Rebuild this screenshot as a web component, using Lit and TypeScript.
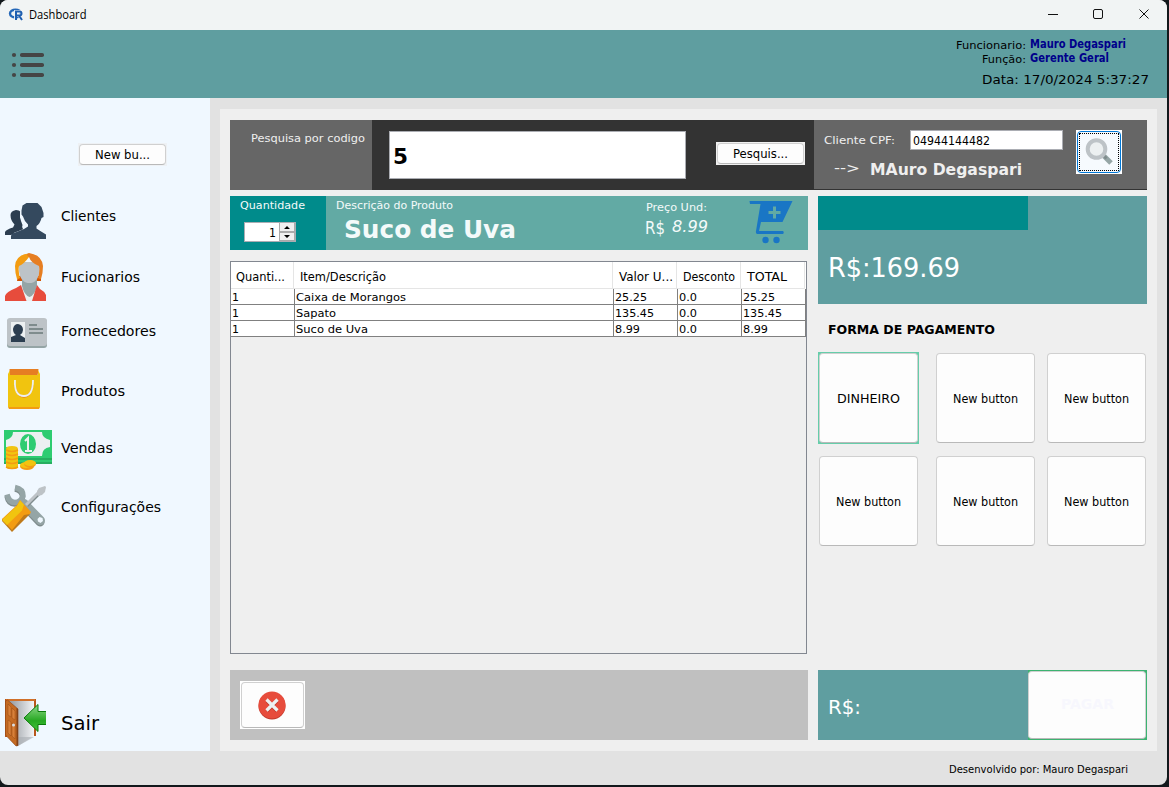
import { LitElement, html, svg, css } from "lit";
import { customElement } from "lit/decorators.js";

/** One line of text set to a known measure; the box ends on the baseline. */
const label = (text: string, width: number, size: number, cls = "") => html`<svg
  class="label ${cls}" width=${width} height=${size}><text x="0" y=${size} font-size=${size}
  textLength=${width} lengthAdjust="spacingAndGlyphs">${text}</text></svg>`;

const clients = svg`
  <path fill="#2c3e50" d="M16 210q3 0 5 2l-1 5 1 4 1.500 4q-1 2 .5 4l1 1-13 5H5v-3q1-2.500 8-4.500l1.500-3q-4-4-4-9.500 0-4 5.500-5z"/>
  <path fill="none" stroke="#f0f8ff" stroke-width="2" d="M23 204l-2 8v5l2 3q1 4 4 7l-3 3-10 4"/>
  <path fill="#34495e" d="M26.500 203h11l4 4 2 6v4l-2 1q-1 5-5 8v2.500l3 2 6.500 4v4.500H11v-3q0-2 3-3l10-4 4-2.500v-2q-4-4-5-8l-1.500-2v-4l1-5z"/>`;
const employee = svg`
  <path fill="#d35400" d="M18 276h23v5H17z"/>
  <path fill="#ecf0f1" d="M21 285h16l-1 16H24z"/>
  <path fill="#95a5a6" d="M22 279h15v7q-2 9-7.500 11-5.500-2-7.500-11z"/>
  <path fill="#bdc3c7" d="M19 262h20.500v9q-1 10-8 12h-4q-7.500-2-8.500-12z"/>
  <path fill="#f39c12" d="M29 253.500q-13 1-14 12.500 0 7 2 13 2 0 3-1-2-7-1-12 5-2 10-9z"/>
  <path fill="#e67e22" d="M29 253q13 2 14 13 0 7-2 13-2 0-3-1 2-7 1-12-8-3-10-9-2-1-2-3z"/>
  <path fill="#e74c3c" d="M21 285l5.500 16H5v-5q1-4 11-8zM37 285l-5 16h14v-6q-2-4-6-6z"/>`;
const card = svg`
  <rect x="7" y="319" width="40" height="29" rx="3" fill="#95a5a6"/>
  <rect x="7" y="318" width="40" height="28" rx="3" fill="#bdc3c7"/>
  <path fill="#ecf0f1" d="M11 322h14v20H11z"/>
  <path fill="#2c3e50" d="M18 324q5 1 5 6q0 3-3 5l5 3v4H11v-5l5-2q-3-2-3-6q1-5 5-5z"/>
  <path fill="#7f8c8d" d="M29 324h8v2h-8zM29 328h14v2H29zM29 332h14v2H29z"/>`;
const bag = svg`
  <path fill="#e67e22" d="M9.500 369h29l-1 7H10z"/>
  <path fill="#f39c12" d="M8 376h32v31l-1 2H9l-1-2z"/>
  <path fill="#f1c40f" d="M8 374l2-4v5h28v-5l2 4v33H8z"/>
  <path fill="none" stroke="#e67e22" stroke-width="1.500" d="M14.500 385q3 12 9.500 12q6 0 9-12"/>
  <path fill="none" stroke="#ecf0f1" stroke-width="1.800" d="M15 380q-1 16 9 16q9 0 9-16"/>`;
const money = svg`
  <path fill="#2ecc71" d="M4 430h48v34H4z"/>
  <path fill="#27ae60" d="M4 458h48v2H4zM4 462h48v2H4z"/>
  <path fill="#ecf0f1" d="M13 432h29q0 6 8 8v7q-8 1-8 9H13q0-8-7-9v-7q7-2 7-8z"/>
  <ellipse cx="28" cy="444" rx="8" ry="10" fill="#2ecc71"/>
  <path fill="none" stroke="#ecf0f1" stroke-width="2" d="M25 441l3-3v12M25 451h7"/>
  <path fill="#f1c40f" d="M6 449q0-3 6-3t6 3v18q0 2-6 2t-6-2z"/>
  <path fill="none" stroke="#f39c12" stroke-width="1.500" d="M6 450q6 3 12 0M6 454q6 3 12 0M6 458q6 3 12 0M6 462q6 3 12 0M6 467q6 3 12 0"/>
  <ellipse cx="27" cy="466.500" rx="7" ry="3.500" fill="#f39c12"/><ellipse cx="26" cy="465" rx="6" ry="3" fill="#f1c40f"/>
  <ellipse cx="30" cy="464" rx="6" ry="3.500" fill="#f39c12"/><ellipse cx="30" cy="463" rx="6" ry="3" fill="#f1c40f"/>`;
const tools = svg`
  <g fill="none" stroke="#7f8c8d"><path stroke-width="5.500" d="M15 489q8 1.500 7.500 8.500q-2 6-8 6.500q-6 0-7.500-8"/>
  <path stroke-width="9" stroke-linecap="round" d="M24 505l16 17"/></g>
  <g fill="none" stroke="#95a5a6"><path stroke-width="5.500" d="M15 487.500q8 1.500 8 8.500q-2 6-8 6.500q-6 0-8-8"/>
  <path stroke-width="9" stroke-linecap="round" d="M24 503.500l16.500 17"/></g>
  <path fill="#f0f8ff" d="M37.500 519l2-2 3 1 .5 3-2.500 2-2.500-1.500z"/>
  <path stroke="#7f8c8d" stroke-width="3.500" d="M27 505.500l12.500-12.500"/>
  <path stroke="#bdc3c7" stroke-width="3" d="M26 505l13-13"/>
  <path fill="#bdc3c7" d="M37 491l2-3 6-2 1 1-1 5-3 3-4 1z"/>
  <path fill="#bf7a1a" d="M2 519v2l10 11 18-18v-2z"/>
  <path fill="#f39c12" d="M20 500l11 12-1 2-6 1-12 15-10-11 15-14z"/>
  <path fill="#f1c40f" d="M20 500.500l4 4-2 6L7 525l-5-5 15-14z"/>`;
const door = svg`
  <path fill="#b8571b" d="M5 699h31v37h-2v-35H7v36H5z"/>
  <path fill="#e98b3b" d="M6 699.500h29v1H6z"/>
  <path fill="url(#room)" d="M8 701h26v35l-16 10z"/>
  <path fill="#a9adb3" opacity=".6" d="M18 737h16l-16 9z"/>
  <path fill="#c46a22" stroke="#8f4210" stroke-width=".6" d="M5.500 701l2-1 10.500 9v36.500l-2 .5L5.500 735z"/>
  <path fill="#824015" d="M16.500 708l1.500 1v36.500l-1.500.5z"/>
  <path fill="#d98038" stroke="#9a4c17" stroke-width=".5" d="M8 704l3 3v10l-3-2zM12 708l3 3v9l-3-2zM8 720l3 2v14l-3-3zM12 723l3 2v14l-3-3z"/>
  <circle cx="13.500" cy="725" r="1.500" fill="#d8dde2"/>
  <path fill="url(#arrow)" stroke="#0a7a0a" stroke-width="1" d="M47 711.500h-9v-7L24 718l14 13.500v-7h9"/>
  <path fill="#f0f8ff" d="M46 703h3v30h-3z"/>
  <defs><linearGradient id="room"><stop offset="0" stop-color="#8f949a"/><stop offset="1" stop-color="#f2f4f6"/></linearGradient>
  <linearGradient id="arrow" x2="0" y2="1"><stop offset="0" stop-color="#8ed88a"/><stop offset=".6" stop-color="#27a822"/><stop offset="1" stop-color="#45c53e"/></linearGradient></defs>`;

const menu = [
  { name: "clientes", text: "Clientes", w: 55, y: 192, icon: clients },
  { name: "funcionarios", text: "Fucionarios", w: 79, y: 253, icon: employee },
  { name: "fornecedores", text: "Fornecedores", w: 95, y: 307, icon: card },
  { name: "produtos", text: "Produtos", w: 64, y: 367, icon: bag },
  { name: "vendas", text: "Vendas", w: 52, y: 424, icon: money },
  { name: "config", text: "Configurações", w: 100, y: 483, icon: tools },
];

const rows = [
  ["Caixa de Morangos", 110, "25.25", 32],
  ["Sapato", 40, "135.45", 39],
  ["Suco de Uva", 72, "8.99", 25],
] as [string, number, string, number][];

@customElement("app-root")
export class AppRoot extends LitElement {
  static styles = css`
    :host { display: block; width: 1169px; height: 787px; background: #12181b; overflow: hidden;
      font-family: "DejaVu Sans", Verdana, sans-serif; color: #000; }
    * { box-sizing: border-box; }
    svg { display: block; flex: none; overflow: visible; }
    .label { fill: currentColor; }
    .bold { font-weight: bold; }
    .italic { font-style: italic; }
    .ui { font-family: "DejaVu Sans Condensed", "DejaVu Sans", sans-serif; font-stretch: condensed; }
    .segoe { font-family: "Open Sans", "Noto Sans", sans-serif; }
    .window { width: 1167px; height: 785px; border-radius: 8px; overflow: hidden; background: #e2e2e2; display: flex; flex-direction: column; }
    .titlebar { height: 30px; flex: none; background: #f1f4f4; display: flex; align-items: flex-start; }
    .titlebar .label { margin: 7px auto 0 5px; }
    .header { height: 68px; flex: none; background: #5f9ea0; display: flex; justify-content: space-between; }
    .user { display: flex; flex-direction: column; align-items: flex-end; padding-right: 18px; }
    .who { display: flex; margin: 0 23px 8px 0; height: 33px; }
    .who > div { display: flex; flex-direction: column; }
    .keys { align-items: flex-end; padding-top: 8px; gap: 3px; margin-right: 4px; }
    .vals { padding-top: 6px; gap: 2px; color: #00008b; }
    .middle { display: flex; height: 653px; flex: none; }
    .side { width: 210px; background: #f0f8ff; display: flex; flex-direction: column; }
    .btn { background: #fdfdfd; border: 1px solid #d0d0d0; border-bottom-color: #b9b9b9; border-radius: 4px;
      display: flex; align-items: center; justify-content: center; }
    .small { padding: 1px; background: #f0f0f0; flex: none; }
    .small .btn { width: 100%; height: 100%; padding: 0 0 3px 0; }
    .new { width: 89px; height: 23px; margin: 45px 0 26px 78px; background: #eef1f4; }
    .item { display: flex; align-items: center; height: 48px; flex: none; }
    .item .label { margin-bottom: 4px; }
    .funcionarios { margin-top: 13px; } .fornecedores { margin-top: 6px; } .produtos { margin-top: 12px; }
    .vendas { margin-top: 9px; } .config { margin-top: 11px; }
    .sair { margin: auto 0 4px; }
    .sair .label { margin: 0 0 5px; }
    .panel { margin: 11px 0 0 10px; width: 937px; background: #efefef; padding: 11px 10px; }
    .search { display: flex; height: 70px; background: #333; color: #efefef; margin-bottom: 6px; }
    .code { width: 142px; background: #666; padding: 11px 0 0 21px; }
    .field { background: #fff; border: 1px solid #abadb3; color: #000; }
    .big { width: 297px; height: 48px; margin: 11px 30px 0 17px; padding: 10px 3px; }
    .find { width: 89px; height: 23px; margin-top: 22px; color: #000; }
    .client { margin-left: 9px; width: 333px; height: 69px; background: #666; display: flex; padding: 10px 25px 0 10px; justify-content: space-between; }
    .cpf { display: flex; }
    .cpf > .label { margin: 3px 15px 0 0; }
    .cpf .field { width: 153px; height: 20px; padding: 2px; }
    .found { display: flex; margin: 9px 0 0 10px; gap: 10px; }
    .lens { width: 46px; height: 44px; background: #fff; padding: 1px; }
    .lens div { height: 42px; border: 1px solid #0078d7; border-radius: 4px; background: #f6fafe; padding: 1px; }
    .lens svg { outline: 1px dotted #000; outline-offset: -1px; }
    .cols { display: flex; justify-content: space-between; }
    .left { width: 578px; } .right { width: 329px; }
    .product { display: flex; height: 54px; background: #62aaa4; color: #f4fafa; margin-bottom: 11px; }
    .qty { width: 96px; background: #008b8b; padding: 3px 10px; }
    .spin { width: 52px; height: 20px; margin: 13px 0 0 4px; display: flex; justify-content: flex-end; padding: 0; }
    .spin .label { margin: 2px 3px 0 0; }
    .desc { padding: 3px 10px; width: 315px; }
    .desc .label + .label { margin: 4px 0 0 8px; }
    .price { padding-top: 5px; margin-left: 4px; width: 104px; }
    .price > .label { margin-left: 1px; }
    .amount { display: flex; gap: 7px; margin-top: 5px; }
    .grid { width: 577px; height: 393px; border: 1px solid #828790; margin-bottom: 16px; }
    .tr { display: grid; grid-template-columns: 64px 319px 64px 64px 64px; height: 16px; }
    .tr > div { border-right: 1px solid #808080; border-bottom: 1px solid #808080; background: #fff; padding-left: 1px; }
    .tr .label { margin-top: 1px; }
    .tr.th { height: 27px; background: #fff; grid-template-columns: 63px 319px 64px 64px 64px; }
    .th > div { border-color: #e5e5e5; padding: 6px 0 0 6px; }
    .th > div:first-child { padding-left: 5px; }
    .actions { height: 70px; background: #c0c0c0; padding: 11px 10px; }
    .cancel { width: 65px; height: 48px; background: #fff; padding: 1px; }
    .cancel .btn { height: 46px; padding-right: 1px; }
    .total { height: 108px; background: #5f9ea0; color: #fff; margin-bottom: 17px; }
    .tab { width: 210px; height: 34px; background: #008b8b; }
    .total .label { margin: 21px 0 0 10px; }
    .forma { margin: 0 0 18px 10px; }
    .pays { display: grid; grid-template-columns: 117px 111px 101px; row-gap: 11px; }
    .pay { width: 101px; height: 92px; border: 1px solid transparent; }
    .pay .btn { height: 90px; padding-bottom: 2px; }
    .on { border-color: #66cdaa; background: #66cdaa; }
    .due { margin-top: 123px; height: 70px; background: #5f9ea0; color: #fff; display: flex; justify-content: space-between; }
    .due > .label { margin: 24px 0 0 10px; }
    .ok { width: 119px; height: 70px; padding: 1px 1px 1px 0; background: #3cb371; color: #f7f7fd; }
    .ok .btn { height: 68px; padding-bottom: 6px; }
    .footer { display: flex; justify-content: flex-end; padding: 12px 39px 0 0; }
  `;

  render() {
    return html`<div class="window">
      <div class="titlebar">
        <svg width="24" height="30">
          <ellipse cx="15.500" cy="13.500" rx="5.500" ry="3.800" fill="none" stroke="#2467b8" stroke-width="2.400"/>
          <path d="M15.500 19.500v-8h4q2.500 0 2.500 2t-2.500 2h-3M19 15.500l3 4.500" fill="none" stroke="#f1f4f4" stroke-width="2.800"/>
          <path d="M16 20v-8.500h3.500q2 0 2 2t-2 2H16M19 15.500l3 4.500" fill="none" stroke="#1f5fb0" stroke-width="2"/>
        </svg>
        ${label("Dashboard", 57.5, 12, "segoe")}
        <svg width="119" height="30" fill="none" stroke="#111">
          <path d="M0 14.500h10M91.500 9.500l9 9M100.500 9.500l-9 9"/><rect x="45.500" y="9.500" width="9" height="9" rx="1.500"/>
        </svg>
      </div>
      <div class="header">
        <svg width="50" height="68" fill="#454545">
          ${[25, 35, 45].map((y) => svg`<circle cx="14" cy=${y} r="2.100"/><rect x="20" y=${y - 2} width="24" height="4" rx="1.800"/>`)}
        </svg>
        <div class="user">
          <div class="who">
            <div class="keys">${label("Funcionario:", 70, 11)}${label("Função:", 44, 11)}</div>
            <div class="vals">${label("Mauro Degaspari", 96, 12, "ui bold")}${label("Gerente Geral", 79, 12, "ui bold")}</div>
          </div>
          ${label("Data: 17/0/2024 5:37:27", 167, 13)}
        </div>
      </div>
      <div class="middle">
        <div class="side">
          <div class="small new"><div class="btn">${label("New bu...", 55, 12, "ui")}</div></div>
          ${menu.map((m) => html`<div class="item ${m.name}">
            <svg width="61" height="48" viewBox="0 ${m.y} 61 48">${m.icon}</svg>${label(m.text, m.w, 14)}</div>`)}
          <div class="item sair"><svg width="61" height="48" viewBox="0 699 61 48">${door}</svg>${label("Sair", 38, 19)}</div>
        </div>
        <div class="panel">
          <div class="search">
            <div class="code">${label("Pesquisa por codigo", 114, 11)}</div>
            <div class="field big">${label("5", 15, 22, "bold")}</div>
            <div class="small find"><div class="btn">${label("Pesquis...", 55, 12, "ui")}</div></div>
            <div class="client">
              <div>
                <div class="cpf">${label("Cliente CPF:", 71, 11)}<div class="field">${label("04944144482", 77, 12, "ui")}</div></div>
                <div class="found">${label("-->", 26, 14)}${label("MAuro Degaspari", 152, 16, "bold")}</div>
              </div>
              <div class="lens"><div><svg width="40" height="38">
                <path d="M25 23l7 7" stroke="#95a5a6" stroke-width="5"/><path d="M24 22l3.500 3.500" stroke="#7f8c8d" stroke-width="3"/>
                <circle cx="17.500" cy="16" r="8.800" fill="#ecf0f1" stroke="#bdc3c7" stroke-width="4"/>
              </svg></div></div>
            </div>
          </div>
          <div class="cols">
            <div class="left">
              <div class="product">
                <div class="qty">${label("Quantidade", 65, 10)}
                  <div class="field spin">${label("1", 7, 12, "ui")}
                    <svg width="16" height="18"><path fill="#aaa" d="M0 0h16v18H0z"/><path fill="#f0f0f0" d="M1 0h14v8H1zM1 10h14v7H1z"/>
                      <path d="M5 6l3-3 3 3zM5 12l3 3 3-3z"/></svg>
                  </div>
                </div>
                <div class="desc">${label("Descrição do Produto", 117, 10)}${label("Suco de Uva", 172, 25, "bold")}</div>
                <div class="price">${label("Preço Und:", 61, 10)}
                  <div class="amount">${label("R$", 20, 18)}${label("8.99", 36, 16, "italic")}</div></div>
                <svg width="44" height="54" fill="#1976c5">
                  <path d="M.5 5H43.500L33.500 26H12l-2 9h24q1.500 1.500 0 3H8q-1.500-1-1-3L11.500 8H1z"/>
                  <path fill="#62aaa4" d="M24 10.500h3V15h4.500v3H27v4.500h-3V18h-4.500v-3H24z"/>
                  <circle cx="16.500" cy="44" r="3.200"/><circle cx="27.500" cy="44" r="3.200"/>
                </svg>
              </div>
              <div class="grid">
                <div class="tr th"><div>${label("Quanti...", 49, 12, "ui")}</div><div>${label("Item/Descrição", 86, 12, "ui")}</div>
                  <div>${label("Valor U...", 54, 12, "ui")}</div><div>${label("Desconto", 52, 12, "ui")}</div><div>${label("TOTAL", 40, 12, "ui")}</div></div>
                ${rows.map(([name, w, v, vw]) => html`<div class="tr"><div>${label("1", 7, 11)}</div><div>${label(name, w, 11)}</div>
                  <div>${label(v, vw, 11)}</div><div>${label("0.0", 18, 11)}</div><div>${label(v, vw, 11)}</div></div>`)}
              </div>
              <div class="actions"><div class="cancel"><div class="btn"><svg width="28" height="28">
                <circle cx="14" cy="15" r="13.500" fill="#c0392b"/><circle cx="14" cy="14" r="13.500" fill="#e74c3c"/>
                <path d="M9 9l10 10M19 9L9 19" stroke="#c0392b" stroke-width="3.500" transform="translate(0 1)"/>
                <path d="M8.500 8.500l11 11M19.500 8.500l-11 11" stroke="#ecf0f1" stroke-width="3.200"/></svg></div></div></div>
            </div>
            <div class="right">
              <div class="total"><div class="tab"></div>${label("R$:169.69", 132, 26)}</div>
              <div class="forma">${label("FORMA DE PAGAMENTO", 167, 12.5, "bold")}</div>
              <div class="pays">${[0, 1, 2, 3, 4, 5].map((i) => html`<div class="pay ${i ? "" : "on"}"><div class="btn">
                ${i ? label("New button", 65, 12, "ui") : label("DINHEIRO", 63, 12, "ui")}</div></div>`)}</div>
              <div class="due">${label("R$:", 33, 20)}<div class="ok"><div class="btn">${label("PAGAR", 53, 14, "bold")}</div></div></div>
            </div>
          </div>
        </div>
      </div>
      <div class="footer">${label("Desenvolvido por: Mauro Degaspari", 179, 10)}</div>
    </div>`;
  }
}
